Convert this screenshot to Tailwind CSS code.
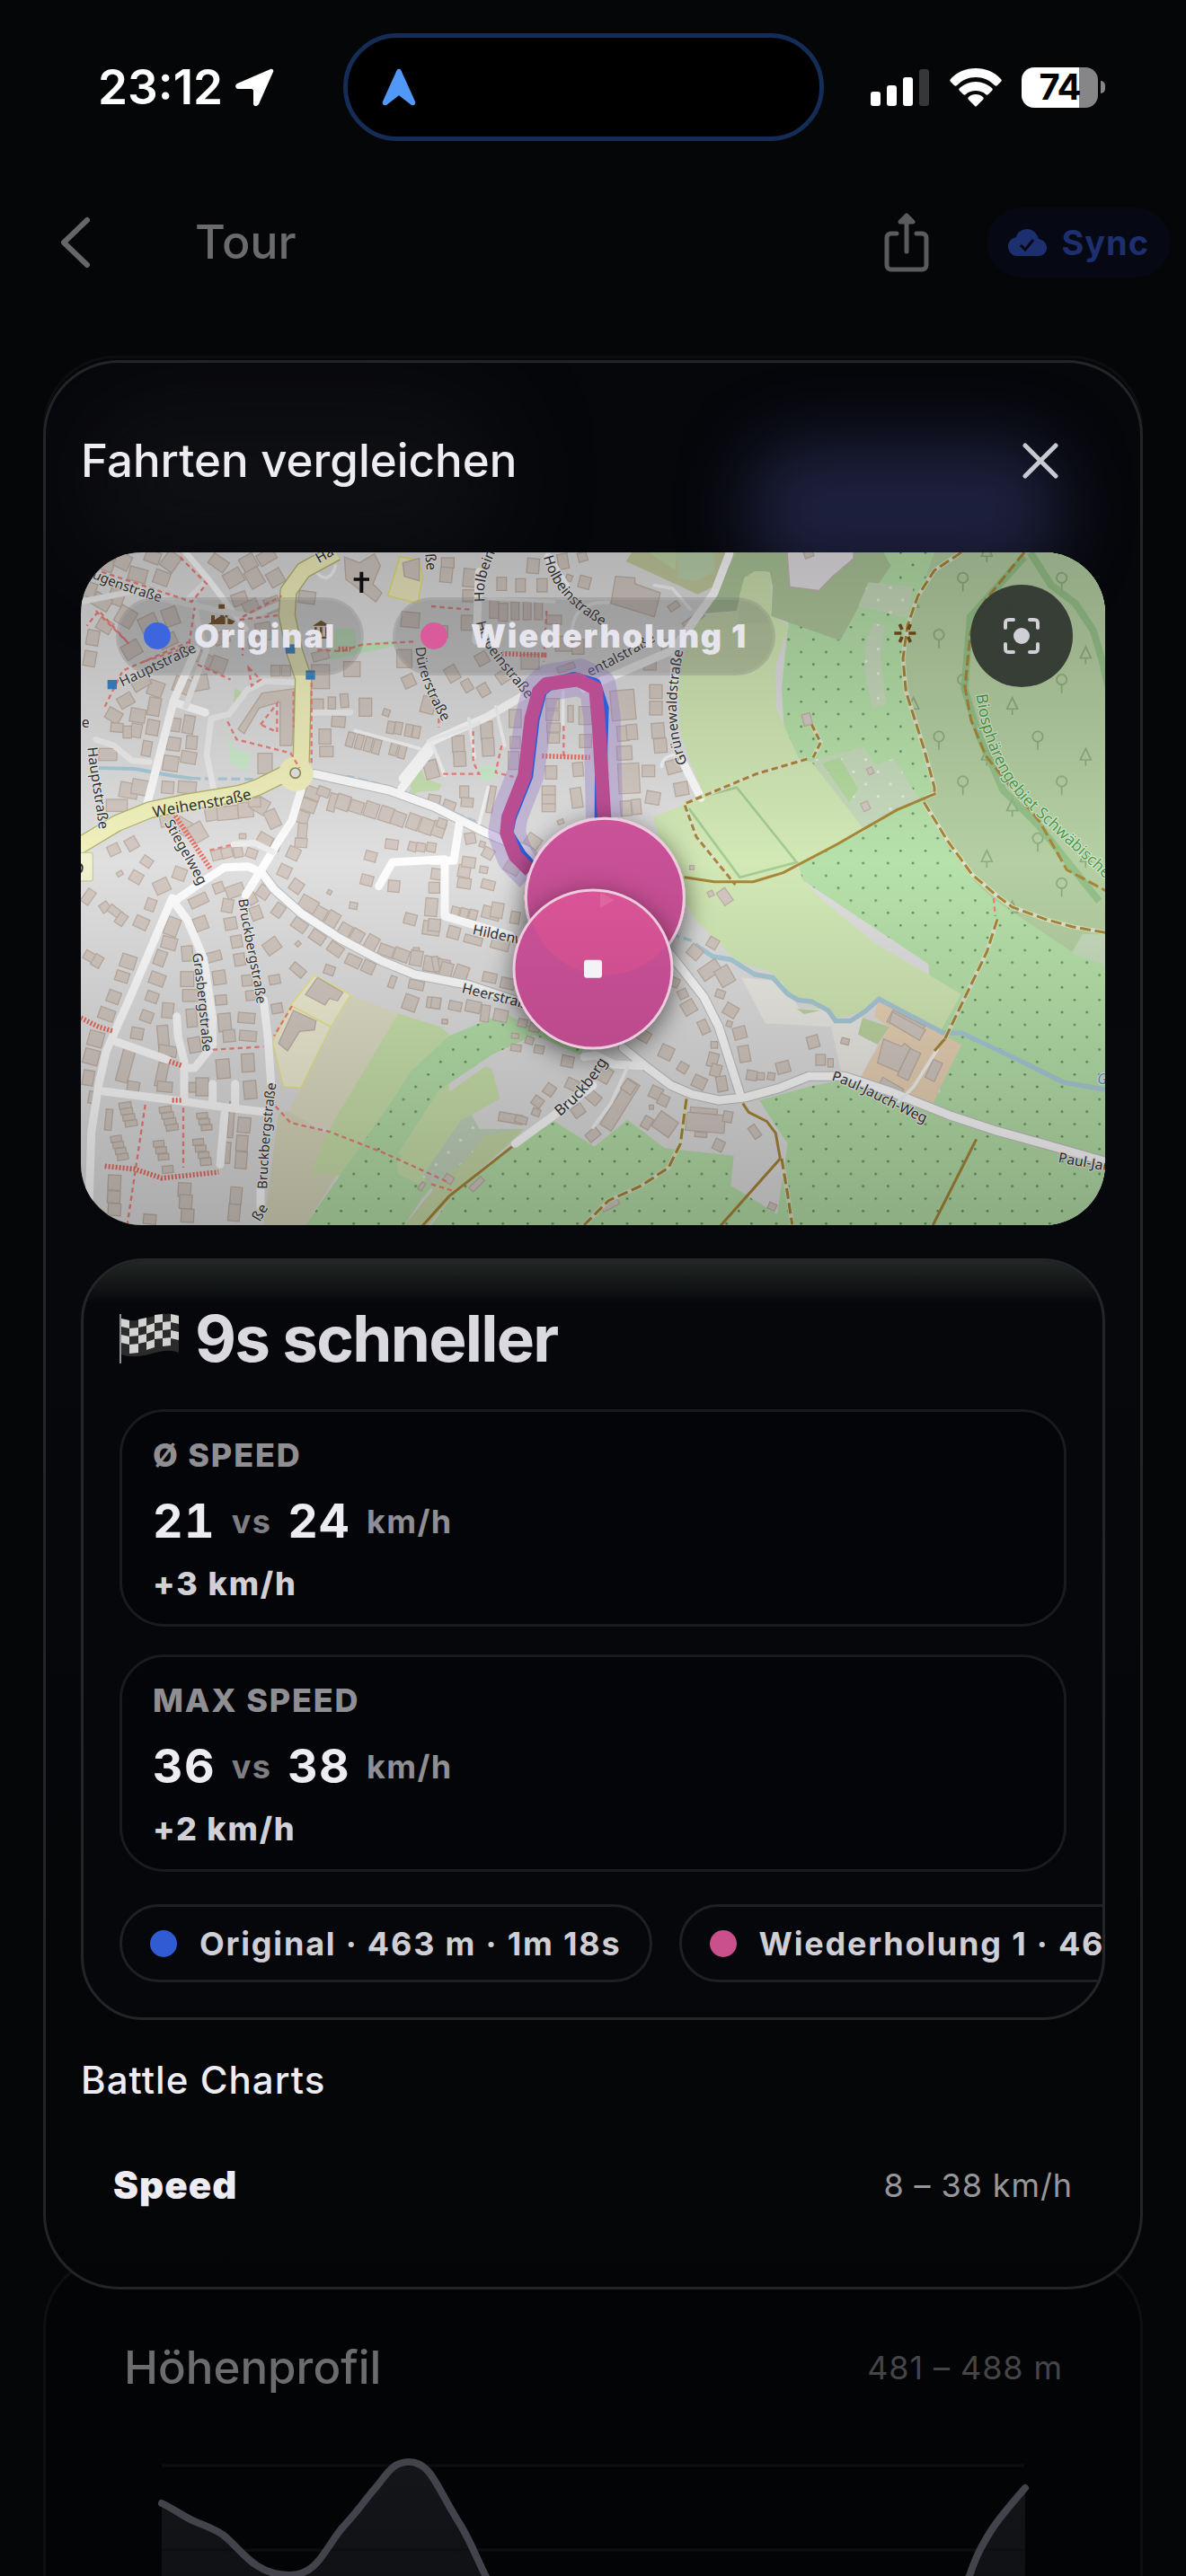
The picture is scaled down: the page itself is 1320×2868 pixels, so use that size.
<!DOCTYPE html>
<html lang="de">
<head>
<meta charset="utf-8">
<meta name="viewport" content="width=device-width, initial-scale=1">
<title>Fahrten vergleichen</title>
<script src="https://cdn.jsdelivr.net/npm/@tailwindcss/browser@4"></script>
</head>
<body class="bg-[#040607] font-['Inter',sans-serif] text-[#edecf2]">
<div class="flex h-screen flex-col overflow-hidden">

  <!-- Status bar -->
  <header class="grid h-[194px] shrink-0 grid-cols-[1fr_auto_1fr] items-center pr-[22px]">
    <div class="flex items-center gap-[14px] pl-[109px]">
      <span class="text-[53px] leading-[60px] font-semibold text-white">23:12</span>
      <svg class="h-[42px] w-[43px]" viewBox="0 0 43 42" aria-hidden="true"><path d="M39 1 2 17c-3 2-2 6 1 6h15c1 0 2 1 2 2v14c0 4 4 4 6 1L42 4c1-2-1-4-3-3z" fill="#fff"/></svg>
    </div>
    <div class="flex h-[120px] w-[535px] items-center rounded-full border-[5px] border-[#152c57] bg-black pl-[38px]">
      <svg class="h-[42px] w-[38px]" viewBox="0 0 38 42" aria-hidden="true"><path d="M16.500 2.500c1-2.500 4-2.500 5 0L37 37c1 3-1 5-4 4L20 31c-1-1-1-1-2 0L5 41c-3 1-5-1-4-4z" fill="#5299f7"/></svg>
    </div>
    <div class="flex items-center justify-end gap-[22px] pr-[68px]">
      <svg class="h-[42px] w-[66px]" viewBox="0 0 66 42" aria-hidden="true"><g fill="#fff"><rect x="0" y="26" width="11" height="16" rx="3"/><rect x="18" y="19" width="11" height="23" rx="3"/><rect x="36" y="10" width="11" height="32" rx="3"/></g><rect x="54" y="1" width="11" height="41" rx="3" fill="#363739"/></svg>
      <svg class="h-[43px] w-[58px]" viewBox="0 0 58 43" aria-hidden="true"><g fill="#fff"><path d="M29 0C18 0 8 4 1 12c-1 1-1 2 0 3l4 4c1 1 2 1 3 0C14 13 21 10 29 10s15 3 21 9c1 1 2 1 3 0l4-4c1-1 1-2 0-3C50 4 40 0 29 0z"/><path d="M29 15c-7 0-13 3-18 7-1 1-1 2 0 3l4 4c1 1 2 1 3 0 3-3 7-4 11-4s8 1 11 4c1 1 2 1 3 0l4-4c1-1 1-2 0-3-5-4-11-7-18-7z"/><path d="M29 29c-3 0-6 1-8 3-1 1-1 2 0 3l7 7c1 1 1 1 2 0l7-7c1-1 1-2 0-3-2-2-5-3-8-3z"/></g></svg>
      <div class="flex items-center gap-[3px]">
        <span class="flex h-[45px] w-[85px] items-center justify-center rounded-[14px] bg-linear-to-r from-white from-75% to-[#868688] to-75% text-[40px] leading-10 font-bold tracking-tight text-black">74</span>
        <span class="h-[14px] w-[5px] rounded-r-full bg-[#868688]"></span>
      </div>
    </div>
  </header>

  <!-- Navigation bar -->
  <nav class="flex h-[152px] shrink-0 items-center pr-[17px] pl-[66px]">
    <button aria-label="Zurück" class="mr-[117px]"><svg class="h-[58px] w-[34px]" viewBox="0 0 34 58" fill="none" stroke="#666668" stroke-width="6" stroke-linecap="round" stroke-linejoin="round"><path d="M31 4 5 29l26 25"/></svg></button>
    <h1 class="text-[52px] leading-[60px] font-medium text-[#6b6b6d]">Tour</h1>
    <button aria-label="Teilen" class="ml-auto"><svg class="h-[66px] w-[50px]" viewBox="0 0 50 66" fill="none" stroke="#5b5b5e" stroke-width="5" stroke-linecap="round" stroke-linejoin="round"><path d="M14 23H8c-3 0-5 2-5 5v30c0 3 2 5 5 5h34c3 0 5-2 5-5V28c0-3-2-5-5-5h-6M25 43V6"/><path d="M18 10 25 3l7 7z" fill="#5b5b5e"/></svg></button>
    <button class="ml-[64px] flex h-[78px] items-center gap-4 rounded-full bg-[#060813] px-6 text-[38px] leading-10 font-bold tracking-wide text-[#1d2f6e]">
      <svg class="h-[30px] w-[43px]" viewBox="0 0 43 30" aria-hidden="true"><path d="M34 11C32 4 27 0 21 0S10 4 9 9C4 10 0 14 0 19c0 6 4 11 10 11h24c5 0 9-4 9-9 0-6-4-9-9-10z" fill="#1d2f6e"/><path d="m14 18 5 5 9-11" fill="none" stroke="#060813" stroke-width="3"/></svg>
      Sync
    </button>
  </nav>

  <main class="mt-[50px] flex shrink-0 flex-col px-12">
    <div class="relative z-10 grid">
      <div class="col-start-1 row-start-1 mb-20 rounded-[80px] border-[3px] border-[#0d0e0f]"></div>

      <!-- Comparison sheet -->
      <section class="relative col-start-1 row-start-1 mt-[5px] overflow-hidden rounded-[84px] border-[3px] border-[#232428] bg-linear-to-b from-[#06070b] via-[#07080c] to-[#040506] px-[39px] pb-[89px]">
        <div class="absolute top-[88px] right-[90px] h-[150px] w-[345px] rounded-[60px] bg-[#1d203d] blur-[36px]"></div>
        <div class="absolute top-[40px] left-[40px] h-[180px] w-[460px] rounded-full bg-[#0f1013] blur-[50px]"></div>
        <div class="relative mt-[69px] flex h-20 items-center justify-between">
          <h2 class="text-[51px] leading-[60px] font-medium">Fahrten vergleichen</h2>
          <button aria-label="Schließen" class="mr-8 flex size-20 items-center justify-center"><svg class="size-10" viewBox="0 0 40 40" stroke="#c9c9d2" stroke-width="5" stroke-linecap="round"><path d="m3 3 34 34M37 3 3 37"/></svg></button>
        </div>

        <!-- Map -->
        <div class="relative mt-[62px] overflow-hidden rounded-[68px]">
          <svg class="block w-full" viewBox="30 45 3420 2247" role="img" aria-label="Karte">
            <defs>
              <pattern id="orchard" width="83" height="83" patternUnits="userSpaceOnUse" x="18" y="36"><circle cx="10" cy="10" r="4" fill="#628f5d"/><circle cx="51" cy="51" r="4" fill="#628f5d"/></pattern>
              <pattern id="vine" width="82" height="82" patternUnits="userSpaceOnUse" x="2354" y="194"><circle cx="10" cy="10" r="5" fill="#e6f0e1"/><circle cx="51" cy="51" r="5" fill="#e6f0e1"/></pattern>
              <pattern id="wood" width="330" height="340" patternUnits="userSpaceOnUse" x="2940" y="90"><g fill="none" stroke="#8faa80" stroke-width="5"><circle cx="35" cy="40" r="17"/><path d="M35 57v28M200 100l-18 38h36zM200 138v20M115 270l-18 38h36zM115 308v20"/><circle cx="285" cy="230" r="17"/><path d="M285 247v28"/></g></pattern>
              <linearGradient id="shade" x1="0" y1="0" x2="0" y2="1"><stop offset="0" stop-opacity=".19"/><stop offset=".25" stop-opacity=".09"/><stop offset=".46" stop-opacity="0"/><stop offset=".6" stop-opacity=".06"/><stop offset="1" stop-opacity=".23"/></linearGradient>
              <linearGradient id="pin" x1="0" y1="0" x2="0" y2="1"><stop offset="0" stop-color="#cb5299"/><stop offset="1" stop-color="#bb4b8c"/></linearGradient>
              <linearGradient id="pinTop" x1="0" y1="0" x2="0" y2="1"><stop offset="0" stop-color="#da5496"/><stop offset=".5" stop-color="#cf5090"/><stop offset="1" stop-color="#c94e8c"/></linearGradient>
              <filter id="drop" x="-30%" y="-30%" width="160%" height="160%"><feDropShadow dx="0" dy="24" stdDeviation="45" flood-opacity=".6"/></filter>
              <clipPath id="overlap"><circle cx="1782" cy="1198" r="258"/></clipPath>
            </defs>

            <!-- Land use -->
            <rect x="30" y="45" width="3420" height="2247" fill="#e0dfdf"/>
            <path fill="#b7e1aa" d="M2400 200 2480 45H3450V2292H1200L1280 2180 1470 2030 1610 1945 1745 2030 1855 1940 1980 2035 2210 2060 2200 2160 2355 2255 2390 2020 2295 1875 2460 1830 2600 1800 2900 1850 2860 1420 2440 1140 2400 1000 2370 500Z"/>
            <path fill="url(#orchard)" d="M2400 200 2480 45H3450V2292H1200L1280 2180 1470 2030 1610 1945 1745 2030 1855 1940 1980 2035 2210 2060 2200 2160 2355 2255 2390 2020 2295 1875 2460 1830 2600 1800 2900 1850 2860 1420 2440 1140 2400 1000 2370 500Z"/>
            <path fill="#d2e8b5" d="M2220 240 2240 140 2280 110 2330 110 2340 255 2395 290 2350 420 2350 560 2430 740 2470 745 2650 975 2420 1090 2440 1140 2500 1200 2680 1350 2970 1520 2900 1645 2700 1535 2640 1580 2560 1600 2400 1530 2340 1450 2220 1410 2080 1270 2000 1120 1940 930 2110 860 2060 730 2030 640 2025 450 2090 260Z"/>
            <path fill="#c4ca9f" d="M1870 45 1850 75 2090 185 2160 150 2220 45Z"/>
            <path fill="#c2d8a8" d="M1925 45 2015 105 2020 45Z"/><path fill="#bcd4ae" d="M2020 45h125v65l-60 30-60-8z"/>
            <path fill="#adc69a" d="M2220 45 2160 150 2100 250 2220 240 2240 150 2280 110 2330 110 2340 160 2335 258 2565 340 2625 230 2700 140 2735 90 2710 45Z"/>
            <path fill="#cde2b0" d="M2230 185 2245 130 2280 108h40l15 25-2 150h-110z"/>
            <path fill="#e4e1e4" stroke="#c9b3bb" stroke-width="4" d="M2388 40h222v25l-70 60-45 47-98-12z"/>
            <g fill="#c8dbbd"><path d="m2660 145 150 15-20 105-165-40z"/><path d="m2675 280 40 12-15 100 20 160-45 13-30-125 5-90z"/><path d="m2470 740 170-45 45 60 60-22 85 137-190 95z"/></g>
            <g fill="url(#vine)"><path d="m2660 145 150 15-20 105-165-40z"/><path d="m2675 280 40 12-15 100 20 160-45 13-30-125 5-90z"/><path d="m2470 740 170-45 45 60 60-22 85 137-190 95z"/></g>
            <path fill="#b5dba0" d="m2505 750 60-20 60 105-30 45z"/>
            <path fill="#b5cfa3" d="M2880 45 2840 160 2790 270 2775 330 2778 480 2810 600 2880 830 2840 870 2920 1020 3010 1140 3080 1205 3340 1380 3375 1320H3450V45Z"/>
            <path fill="url(#wood)" d="M2880 45 2840 160 2790 270 2775 330 2778 480 2810 600 2880 830 2840 870 2920 1020 3010 1140 3080 1205 3340 1380 3375 1320H3450V45Z"/>
            <path fill="#c8dbbd" d="m3375 1320 75 5v100l-112-42z"/>
            <path fill="#ecebe6" d="M2235 1465 2370 1480 2430 1570 2520 1570 2560 1610 2640 1600 2625 1655 2690 1690 2630 1805 2570 1785 2535 1630 2315 1618Z"/>
            <path fill="#bfd6a2" d="m2640 1600 90 30-40 58-65-33zM2420 1570l80 5-55 12z"/>
            <path fill="#ead3b6" d="m2695 1540 275 150-50 100-30 60-20 60-90-30-150-75 100-175-53-35z"/>
            <path fill="#e0dfc6" d="m930 1525 160 60-230 390-140-55z"/>
            <path fill="#dad9bd" d="m690 1920 30-10 220 125-160 257H640z"/>
            <path fill="#cbe3ad" d="m1090 1585 140 45 30 25 0 200-160 300-300-40 60-145z"/>
            <path fill="#b7e1aa" d="m1260 1660-130 120-50 80-300 432h330l60-90 60-70-80-35-60-45 135-210 180-120 140-65 155 68 20-68-105-30h-90l-80-45z"/>
            <path fill="url(#orchard)" d="m1260 1660-130 120-50 80-300 432h330l60-90 60-70-80-35-60-45 135-210 180-120 140-65 155 68 20-68-105-30h-90l-80-45z"/>
            <path fill="#cbe3ad" d="m1200 1630 40 15 20 15-60 50zM1200 1890l180-128 22 8 28 100-90 50-80 80-90 160-80-38-5-35z"/>
            <path fill="#c4d6be" d="m1200 2085 100-145 35-15 25 45h150l-110 60-80 60-100 100-50-60z"/><path fill="url(#vine)" d="m1200 2085 100-145 35-15 25 45h150l-110 60-80 60-100 100-50-60z"/>
            <path fill="#c8dba8" d="m1110 2292 130-160 80-60 60-80 130-22-60 60-150 130-110 132z"/>
            <path fill="#f0eed4" stroke="#ebe68e" stroke-width="5" d="m810 1458 120 64-65 108-100 205-60-5-35-150 65-130zM735 1560l130 70"/>
            <g fill="#c7e0b0"><path d="m520 640 20 60 60 20-20 60-50-30z" fill="#cdeccf"/><path d="m860 405 20-105h65l5 50 130-10 10 15z" fill="#c2e8c0"/><path d="m1130 810 30-60 20 50 55 20-10 20-70 5-20 15z"/><path d="m1055 190 40-130 65 10 10 60-15 85z" fill="#eeeac0" stroke="#e6e27a" stroke-width="5"/><path d="m1360 760 50-5 10 40-30 15-30-10z" fill="#cdeccf"/><path d="m545 500 20 10-10 50-15-15z"/></g>
            <path fill="none" stroke="#a4cc94" stroke-width="8" d="m2070 870 150-40 200 250-190 50-170-230"/>

            <!-- Water -->
            <g fill="none" stroke="#a9cbd8" stroke-width="16"><path d="m2080 1355 60 40 60 10 80 50 60 10 50 55 35 20 45 5 55 30 25 35h50l50-33 45-40 215 113h60l180 85 160 80 140 25"/><path stroke-width="12" d="m90 765 120 3 110 20 80 12"/><path stroke-dasharray="30 14" stroke-width="10" d="m400 800 230 3M870 790l60 5 200 50M1240 900l110 45M2000 1320l80 25"/></g>

            <g id="buildings" fill="#d3c9c2" stroke="#bfb1a6" stroke-width="4"></g>
            <g fill="#d3c9c2" stroke="#bfb1a6" stroke-width="4">
              <path d="m555 635 80-120 110-15-10 190h-40V545l-70 20-50 85z"/>
              <path d="m1815 125 65 5 0 20 85 30-20 80-145-45z"/><path d="m910 60 50 20 50-30 20 40-25 60 30 30-20 30-100-75z"/><path d="m1105 80 55-15v75l-50-15z"/>
              <path d="m820 1465 85 50-18 28-27-8-15 22-65-35z"/><path d="m740 1575 75 35-5 30-50 5-40 65-30-25z"/>
              <path d="m2740 1580 110 60-20 35-100-60zM2710 1670l60 25 10-10 20 15-40 80-70-30z"/>
            </g>

            <!-- Street casings and fills -->
            <g fill="none" stroke-linejoin="round" stroke-linecap="round">
              <g stroke="#c3c2c2" stroke-width="34">
                <path d="m810 785 250 55 150 55 170 85 140 60M630 1110l45 60 90 80 130 85 140 75 110 45 180 35 180 60M1840 1700l80 65 80 60 70 30 90 20 90-10 110-30 100-40h120l150 50 200 80 150 50 180 50 210 60M1960 1340l60 75 90 115 50 100 35 110 38 120"/>
              </g>
              <g stroke="#fdfdfd" stroke-width="27">
                <path d="m340 1212 100-70 70-45 80-3 40 20M580 1190l50-80 60-100 45-70 30-100"/>
                <path d="m55 2292 10-312 25-160 25-110 80-180 80-190 60-140"/>
                <path d="m340 1212 45 60 55 130 30 200 0 90-60 75h-35"/>
                <path d="m350 1595 5 70 20 80v130"/>
                <path d="m150 1680 170 60M105 1845l220 28 220 30 95 10M470 1820v70M545 1820v75M510 1920l-15 170"/>
                <path d="m580 1190 50-80 45 60 90 80 130 85 140 75 110 45 180 35 180 60"/>
                <path d="m640 1540 15 130 10 150M630 2170v60"/>
                <path d="m810 785 250 55 150 55 170 85 140 60 40 70"/>
                <path d="m1960 1340 60 75 90 115 50 100 35 110 38 120"/>
                <path d="m1200 705-100 130M1105 800l100-125 180-80 120-70"/>
                <path d="m1480 2020 130-95 130-100M1710 1730l40-5 60 30 100 5M1840 1700l80 65 80 60 70 30 90 20 90-10 110-30 100-40h120l150 50 200 80 150 50 180 50 210 60"/>
                <path d="m1200 1075 75 0 20-130M1245 1070l0 190 100 30 120 35M1025 1160l45-80 170-10"/>
                <path d="m2010 500 5-140 130-180 50-130M1360 110l-10 230M2010 370l-300 130M1590 60l60 100M2040 745l60 120"/>
                <path d="m340 545 105 35M250 890l90-350 75-170"/>
                <path d="m380 45 80 95 120 160" stroke-width="20"/>
              </g>
              <g stroke="#eeeeee" stroke-width="20"><path d="m480 870-30-150 15-120 60-15 60-80 60-30 110 5M380 210l60-60M30 210l200-40M300 200l300 60 110-50M410 210l10 70 30 90-70 190M800 580h130M80 670l60 20 60 50 60 5M540 1020l70-5 60 30"/></g>
              <path stroke="#f5f5f5" stroke-width="11" d="m945 640 215 60M1205 690l40 100M1190 675l170-60M1325 600l20 130M1415 560l30 130M1640 510v110M1360 950l30-120M1670 300c10-80 70-90 120-88M810 100c30 50 60 30 70-10M1390 200l220 10M1945 155l60 10 60 70M1970 760c0-30 30-40 60-40M1740 1965l60-80 55-120M2760 1880l50-50 80-125"/>
              <path stroke="#b4b36f" stroke-width="58" stroke-linecap="butt" d="m0 1040 150-90 110-45 120-25 180-30 60-20 80-40 65-25 8-300-30-90-25-120 5-80 50-70 110-60"/>
              <path stroke="#f2f2bd" stroke-width="50" stroke-linecap="butt" d="m0 1040 150-90 110-45 120-25 180-30 60-20 80-40 65-25 8-300-30-90-25-120 5-80 50-70 110-60"/>
            </g>
            <circle cx="748" cy="785" r="58" fill="#f2f2bd"/><circle cx="746" cy="782" r="17" fill="#e6e6e6" stroke="#8f9057" stroke-width="5"/>
            <rect x="0" y="1048" width="70" height="95" rx="8" fill="#f1f2cf" stroke="#c9cf9c" stroke-width="4"/><path d="M30 1086q10 12 0 28" fill="none" stroke="#333" stroke-width="6"/>

            <!-- Paths and tracks -->
            <path fill="none" stroke="#ee8079" stroke-width="7" stroke-dasharray="16 12" d="m100 110 300 100 50-60-90-90M80 240l110 110-100-110-40 50M110 560l60-120 230-100M240 410l150-50 20-130M570 260l130-70M560 270l130-15M570 300v90M420 420l110 50M520 610l30 60 180 45 30 50M740 510v120M800 480v280M630 620l55-70v95zM820 370l80 5 70-22 170-10M1200 225l140 12M1585 240l-10 170M1642 625v100M1240 785l120 0-20-40 0-110M1435 690l-20 90 60 15M1225 600v30M590 430l40 40-30 20zM470 1706l170-10M245 1890l-30 200-30 200M372 1900v200M735 1560l-60 100M680 1895l50 55 130 30 180 70 220 100M460 1040l80-20M3078 1200l5 60M1200 2155l80 25"/>
            <path fill="none" stroke="#ea6c62" stroke-width="17" stroke-dasharray="6 6" d="m345 925 120 180M30 1600l60 30 50 15M110 2095l100 10 90 30 190-20M325 1745l45 15M335 1875h30M1435 383l150 5M1570 725l160 5M890 368h40"/>
            <path fill="none" stroke="#8ebd82" stroke-width="24" opacity=".8" d="m3200 45 70 110 80 60 60 90 30 100 30 130M3180 60l-180 200-20 240 50 160 80 180 120 120 200 250"/>
            <path fill="none" stroke="#dbe5c8" stroke-width="15" d="m2970 45-90 60-55 85-35 100-15 110 10 110 60 190 35 130 0 20-30 15M2845 880l80 130 80 110 75 65 60 45 110 40 90 25 110 20M2455 735l-170 50-120 50-120 50 40 110 130 160M2470 620l30 60-25 50M3090 1270l-35 110-140 290M2052 1870l-20 150-40 80-90 60-110 50-90 90M2370 2070l20 120 15 100"/>
            <g fill="none" stroke="#a88738" stroke-width="9"><path stroke-dasharray="36 14" d="m2970 45-90 60-55 85-35 100-15 110 10 110 60 190 35 130 0 20M2845 880l80 130 80 110 75 65 60 45 110 40 90 25 110 20M3180 45l-130 160-50 110-18 180 20 110 50 120 80 100 100 120 90 160 130 70M3090 1270l-35 110-140 290M2052 1870l-20 150-40 80-90 60-110 50-90 90M2370 2070l20 120 15 100"/><path stroke-dasharray="22 12" d="m2455 735-170 50-120 50-120 50 40 110 130 160M2470 620l30 60-25 50"/><path d="m2885 850-130 55-200 115-180 95-100 30h-130l-100-15M2915 1670l-35 40M1470 2030l-210 165-90 100M2240 1885l20 30 60 30 30 40 15 85-200 225M3020 2005l-145 287"/></g>
            <g fill="#774f1c"><path d="m500 255 45 20-10 10h-80zM490 218h20v15h-20zM465 255h12v30h-12zM495 255h12v30h-12zM520 255h-8v30h8zM804 290l28-18 30 18zM810 295h8v30h-8zM828 295h8v30h-8zM846 295h8v30h-8zM804 326h60v7h-60z"/><path transform="translate(2782 315)" stroke="#774f1c" stroke-width="11" d="M-36 0h24M12 0h24M-18-30l8 18M18-30l-8 18M-18 30l8-18M18 30l-8-18"/></g>
            <path fill="#111" d="M961 110h12v20h20v10h-20v40h-12v-40h-20v-10h20z"/>
            <g fill="#3b86c8"><rect x="714" y="352" width="31" height="31"/><rect x="781" y="439" width="31" height="31"/><rect x="119" y="471" width="31" height="31"/></g>

            <!-- Labels -->
            <defs>
              <path id="l-haupt" d="M168 494 425 372"/><path id="l-haupt2" d="M52 697C60 780 78 860 92 985"/><path id="l-augen" d="M66 130C130 160 220 190 320 218"/><path id="l-weihen" d="M275 932C380 905 500 900 630 860"/><path id="l-stieg" d="M308 948C340 1010 380 1070 435 1180"/><path id="l-duerer" d="M1148 362C1150 430 1180 520 1255 640"/><path id="l-holb1" d="M1378 210C1370 130 1400 80 1440 -20"/><path id="l-holb2" d="M1575 60C1600 160 1670 240 1800 305"/><path id="l-holb3" d="M1350 278C1365 370 1440 430 1530 550"/><path id="l-ental" d="M1730 460C1800 425 1870 390 1970 328"/><path id="l-gruen" d="M2055 748C2008 640 2010 520 2048 340"/><path id="l-bio" d="M3020 520C3035 650 3085 790 3185 890L3520 1200"/><path id="l-gras" d="M402 1385C420 1500 428 1600 440 1750"/><path id="l-bruck1" d="M556 1204C570 1320 606 1440 622 1590"/><path id="l-bruck2" d="M652 2172C655 2050 665 1930 690 1770"/><path id="l-bruckb" d="M1630 1930C1690 1880 1740 1830 1795 1735"/><path id="l-jauch" d="M2535 1808C2640 1840 2720 1900 2880 1965"/>
            </defs>
            <g font-family="Noto Sans, sans-serif" font-size="47" fill="#333" stroke="#f0f0f0" stroke-width="6" stroke-linejoin="round" paint-order="stroke">
              <text><textPath href="#l-haupt">Hauptstraße</textPath></text>
              <text><textPath href="#l-haupt2">Hauptstraße</textPath></text>
              <text font-size="45"><textPath href="#l-augen">ugenstraße</textPath></text>
              <text font-size="51" stroke="#f2f2bd"><textPath href="#l-weihen">Weihenstraße</textPath></text>
              <text><textPath href="#l-stieg">Stiegelweg</textPath></text>
              <text><textPath href="#l-duerer">Dürerstraße</textPath></text>
              <text><textPath href="#l-holb1">Holbein</textPath></text>
              <text><textPath href="#l-holb2">Holbeinstraße</textPath></text>
              <text><textPath href="#l-holb3">Holbeinstraße</textPath></text>
              <text><textPath href="#l-ental">entalstraße</textPath></text>
              <text><textPath href="#l-gruen">Grünewaldstraße</textPath></text>
              <text fill="#4e9a51" stroke="#d9ecd0" font-size="53"><textPath href="#l-bio">Biosphärengebiet Schwäbische</textPath></text>
              <text font-size="45"><textPath href="#l-gras">Grasbergstraße</textPath></text>
              <text font-size="45"><textPath href="#l-bruck1">Bruckbergstraße</textPath></text>
              <text font-size="45"><textPath href="#l-bruck2">Bruckbergstraße</textPath></text>
              <text font-size="50"><textPath href="#l-bruckb">Bruckberg</textPath></text>
              <text><textPath href="#l-jauch">Paul-Jauch-Weg</textPath></text>
              <text transform="translate(3292 2082) rotate(10)">Paul-Jau</text>
              <text transform="translate(1336 1320) rotate(12)">Hildenw</text>
              <text transform="translate(1300 1515) rotate(14)">Heerstraß</text>
              <text transform="translate(32 630)">e</text>
              <text transform="translate(825 82) rotate(-30)">Ha</text>
              <text transform="translate(1180 50) rotate(85)">ße</text>
              <text transform="translate(628 2282) rotate(-60)">ße</text>
              <text x="3424" y="1820" fill="#5a93b8" font-style="italic">G</text>
            </g>

            <rect x="30" y="45" width="3420" height="2247" fill="url(#shade)"/>

            <!-- Recorded routes -->
            <g fill="none" stroke-linejoin="round">
              <path stroke="#9478c8" stroke-opacity=".38" stroke-width="124" d="m1540 1120-60-60-28-75 8-60 55-140 25-180 25-100 25-25 105-18 60 30 15 100 8 338"/>
              <path stroke="#2f5fd6" stroke-width="42" d="m1535 1098-38-42-44-72 10-52 56-140 22-190 25-95 25-20 85-22 70 20 26 80-4 130-2 240"/>
              <path stroke="#b84d92" stroke-width="46" d="m1530 1108-50-50-28-75 5-53 55-140 22-190 25-90 25-25 105-15 60 30 10 120 20 330"/>
            </g>

            <!-- Start and finish pins -->
            <circle cx="1780" cy="1198" r="264" fill="url(#pin)" stroke="#efcbe0" stroke-width="9" filter="url(#drop)"/>
            <circle cx="1740" cy="1437" r="264" fill="url(#pin)" filter="url(#drop)"/>
            <circle cx="1740" cy="1437" r="264" fill="url(#pinTop)" clip-path="url(#overlap)"/>
            <path d="m1764 1180 46 26-46 28z" fill="#e0659f"/>
            <circle cx="1740" cy="1437" r="264" fill="none" stroke="#efcbe0" stroke-width="9"/>
            <rect x="1710" y="1406" width="60" height="60" rx="9" fill="#f3f2f4"/>
          </svg>

          <div class="absolute inset-x-0 top-0 flex items-center justify-between pt-9 pr-9 pl-[39px]">
            <div class="flex gap-8 text-[36px] leading-10 font-black tracking-wider text-[#e6e4ec]">
              <span class="flex h-[87px] items-center gap-[26px] rounded-full border-[3px] border-white/8 bg-[#4a4a50]/25 px-[28px]"><i class="size-[30px] rounded-full bg-[#3d66de]"></i>Original</span>
              <span class="flex h-[87px] items-center gap-[26px] rounded-full border-[3px] border-white/8 bg-[#4a4a50]/25 px-[28px]"><i class="size-[30px] rounded-full bg-[#d95b9b]"></i>Wiederholung 1</span>
            </div>
            <button aria-label="Zentrieren" class="flex size-[114px] items-center justify-center rounded-full bg-[#343a33]/97">
              <svg class="size-10" viewBox="0 0 40 40" fill="none" stroke="#d0cfd6" stroke-width="4" stroke-linecap="round"><path d="M2 11V6c0-3 1-4 4-4h5M29 2h5c3 0 4 1 4 4v5M38 29v5c0 3-1 4-4 4h-5M11 38H6c-3 0-4-1-4-4v-5"/><circle cx="20" cy="20" r="9" fill="#d0cfd6" stroke="none"/></svg>
            </button>
          </div>
        </div>

        <!-- Result -->
        <article class="relative mt-[37px] overflow-hidden rounded-[70px] border-[3px] border-[#232528] bg-[#06070b] px-10 pt-10 pb-[39px]">
          <div class="absolute inset-x-0 top-0 h-12 bg-linear-to-b from-[#222723] to-transparent"></div>
          <h3 class="relative flex h-[92px] items-center gap-[18px] text-[71px] leading-[80px] font-bold tracking-tight text-[#dad9e0]">
            <svg class="h-[56px] w-[66px] shrink-0" viewBox="0 0 66 56" aria-hidden="true">
              <path d="M2 6c10 4 20 2 30-1s22-6 34-3v42c-10-4-20-2-30 1s-24 5-34 1z" fill="#2b2b2b"/>
              <g fill="#d2d2d0"><path d="M2 6l9 2v9l-9-2zM2 24l9 2v9l-9-2zM11 17l10-1v9l-10 1zM11 35l10-1v10l-10 1zM21 7l9-2v9l-9 2zM21 25l9-2v9l-9 2zM30 14l9-3v9l-9 3zM30 32l9-3v9l-9 3zM39 2l9-1v9l-9 1zM39 20l9-1v9l-9 1zM48 10l9-1v9l-9 1zM48 28l9-1v9l-9 1zM57 1l9 2v9l-9-2zM57 19l9 2v9l-9-2z"/></g>
              <path d="M1 1v55" stroke="#8d939b" stroke-width="2"/>
            </svg>
            9s schneller
          </h3>

          <dl class="relative mt-[33px] flex flex-col gap-[31px]">
            <div class="h-[242px] rounded-[50px] border-[3px] border-[#1a1b1f] bg-[#040508]/60 px-[34px] pt-7">
              <dt class="text-[36px] leading-10 font-extrabold tracking-wider text-[#8e8e93]">Ø SPEED</dt>
              <dd>
                <p class="mt-[22px] flex h-16 items-center gap-[18px] text-[52px] leading-[64px] font-bold tracking-wide tabular-nums">21 <span class="text-[36px] font-bold text-[#7e7e83]">vs</span> 24 <span class="text-[36px] font-bold text-[#8e8e93]">km/h</span></p>
                <p class="mt-[17px] text-[36px] leading-10 font-extrabold tracking-wider text-[#d0d0d6]">+3 km/h</p>
              </dd>
            </div>
            <div class="h-[242px] rounded-[50px] border-[3px] border-[#1a1b1f] bg-[#040508]/60 px-[34px] pt-7">
              <dt class="text-[36px] leading-10 font-extrabold tracking-wider text-[#8e8e93]">MAX SPEED</dt>
              <dd>
                <p class="mt-[22px] flex h-16 items-center gap-[18px] text-[52px] leading-[64px] font-bold tracking-wide tabular-nums">36 <span class="text-[36px] font-bold text-[#7e7e83]">vs</span> 38 <span class="text-[36px] font-bold text-[#8e8e93]">km/h</span></p>
                <p class="mt-[17px] text-[36px] leading-10 font-extrabold tracking-wider text-[#d0d0d6]">+2 km/h</p>
              </dd>
            </div>
          </dl>

          <ul class="relative mt-9 -mr-10 flex gap-[30px] overflow-hidden text-[36px] leading-10 font-bold tracking-wider whitespace-nowrap text-[#cfced4]">
            <li class="flex h-[87px] shrink-0 items-center gap-[25px] rounded-full border-[3px] border-[#1f2024] px-[31px]"><i class="size-[30px] rounded-full bg-[#315bd2]"></i>Original · 463 m · 1m 18s</li>
            <li class="flex h-[87px] shrink-0 items-center gap-[25px] rounded-full border-[3px] border-[#1f2024] px-[31px]"><i class="size-[30px] rounded-full bg-[#c94f8d]"></i>Wiederholung 1 · 463 m · 1m 9s</li>
          </ul>
        </article>

        <h3 class="mt-[43px] text-[42px] leading-[48px] font-medium tracking-wide">Battle Charts</h3>
        <div class="mt-[69px] flex items-center justify-between pr-[36px] pl-[36px] leading-[48px]">
          <h4 class="text-[42px] font-black tracking-wide">Speed</h4>
          <span class="text-[36px] font-normal tracking-wide text-[#97979b]">8 – 38 km/h</span>
        </div>
      </section>
    </div>

    <!-- Elevation profile -->
    <section class="-mt-[38px] rounded-[80px] border-[3px] border-[#0e0f11] bg-[#030406]">
      <div class="mt-[90px] flex h-16 items-center justify-between pr-[86px] pl-[87px]">
        <h2 class="text-[51px] leading-[60px] font-medium text-[#6c6c6e]">Höhenprofil</h2>
        <span class="text-[36px] leading-10 tracking-wide text-[#454549]">481 – 488 m</span>
      </div>
      <svg class="mt-[58px] block w-full" viewBox="51 2726 1218 400" role="img" aria-label="Höhenprofil">
        <defs><linearGradient id="fade" x1="0" y1="0" x2="0" y2="1"><stop offset="0" stop-color="#15161a"/><stop offset="1" stop-color="#06070a"/></linearGradient></defs>
        <path d="M180 2787C197 2795 205 2803 221 2809S240 2817 248 2822C268 2837 282 2867 322 2867C355 2867 362 2835 383 2812S410 2778 417 2771C430 2756 436 2741 455 2741C480 2741 485 2768 513 2812C530 2840 535 2865 560 2900L650 3080H940L1079 2868C1085 2850 1090 2838 1104 2816C1116 2798 1130 2783 1141 2770V3126H180Z" fill="url(#fade)"/>
        <path d="M180 2745H1140M180 2839H1140" stroke="#0d0e10" stroke-width="3"/>
        <path d="M180 2787C197 2795 205 2803 221 2809S240 2817 248 2822C268 2837 282 2867 322 2867C355 2867 362 2835 383 2812S410 2778 417 2771C430 2756 436 2741 455 2741C480 2741 485 2768 513 2812C530 2840 535 2865 560 2900L650 3080H940L1079 2868C1085 2850 1090 2838 1104 2816C1116 2798 1130 2783 1141 2770" fill="none" stroke="#43444b" stroke-width="8" stroke-linecap="round" stroke-linejoin="round"/>
      </svg>
    </section>
  </main>
</div>

<script>
// Houses on the map: centre x, centre y, width, height, rotation in degrees.
const houses = [
[110,85,60,40,20],[170,75,50,50,25],[220,120,60,45,15],[150,190,50,60,20],[100,210,60,45,30],[60,170,40,50,20],[270,60,50,40,20],[330,75,50,60,35],[300,130,50,45,20],[180,260,60,60,30],[110,290,50,40,30],[260,290,60,70,-25],[330,260,50,60,-20],[200,370,60,50,-30],[320,340,60,40,-25],[70,330,40,50,10],[60,400,40,50,10],
[490,80,60,40,35],[540,130,60,50,-30],[590,80,50,50,-30],[650,60,60,40,-30],[610,130,50,60,-30],[680,130,50,50,-30],[560,200,50,40,-20],[600,230,50,50,-25],[670,220,50,50,-20],[640,310,50,60,-10],[500,330,50,40,-20],[440,400,60,40,30],[490,420,50,50,20],[620,350,60,40,-10],
[785,195,55,40,8],[680,440,30,36,0],[715,440,30,36,0],[830,390,55,30,-15],[830,460,60,80,0],[935,435,55,50,0],[820,555,40,40,0],[868,548,25,40,0],[910,540,26,45,-5],[890,610,45,36,5],[980,562,42,60,0],[1050,580,22,22,20],[845,660,40,50,0],[850,710,45,35,0],[1125,475,40,40,-25],[1190,555,45,55,15],[1110,400,50,60,0],[1130,270,60,50,5],
[930,670,24,48,15],[960,678,24,48,15],[990,686,24,48,15],[1018,694,24,48,15],[1075,700,24,46,15],[1103,710,24,46,15],[1065,630,24,40,10],[1090,632,24,40,10],[1125,640,24,40,10],[1150,645,24,40,10],[1200,770,45,60,-15],[645,750,48,68,0],
[280,500,50,50,20],[230,480,60,40,-30],[180,540,50,40,-30],[140,590,50,40,30],[220,590,50,45,10],[275,560,40,60,10],[270,630,40,50,10],[215,640,35,45,10],[185,645,28,40,0],[250,700,30,50,10],[150,630,40,30,5],[120,720,60,40,0],[370,490,60,50,20],[430,480,50,50,-10],[390,620,36,60,10],[340,620,44,44,8],[340,685,44,44,8],[400,680,36,44,5],[390,730,50,40,10],[330,750,50,50,8],[320,830,40,40,5],[385,830,60,40,5],[190,840,60,50,10],[150,890,70,40,0],[230,830,60,50,10],
[470,915,50,50,-10],[520,915,70,45,-5],[580,905,50,50,-5],[630,890,50,50,30],[670,935,40,60,-25],[610,880,40,30,0],
[320,940,50,40,-10],[370,960,50,50,30],[420,980,50,60,-30],[140,1038,38,34,-25],[200,1018,38,40,-30],[250,1078,36,30,35],[215,1130,40,36,30],[300,1160,50,44,-25],[360,1118,42,40,20],[160,1118,20,14,-30],[485,1055,36,34,-15],[518,1048,36,34,-15],[555,1046,30,34,-10],[570,993,22,16,0],[645,1005,50,36,30],[680,1025,30,30,20],[600,1050,36,30,20],
[805,850,50,40,20],[790,890,50,40,20],[770,930,40,40,20],[770,975,30,50,5],[765,1015,40,30,5],[740,1050,40,40,25],[710,1110,40,40,25],[870,880,25,60,15],[905,880,45,50,18],[950,895,45,40,18],[1000,905,45,50,18],[1050,920,45,50,18],[1090,935,45,45,20],[1140,945,40,50,20],[1185,960,45,50,20],[1225,970,40,50,20],[840,845,40,30,20],
[1068,1020,42,32,8],[998,1060,38,32,15],[1138,1028,28,30,15],[1165,1030,30,28,10],[1200,1030,30,30,10],[985,1140,40,34,15],[1075,1160,38,38,5],[1220,1120,40,36,8],[1210,1165,36,36,0],[860,1180,14,14,30],[940,1225,26,22,10],
[55,1195,30,50,35],[110,1230,30,30,-35],[145,1245,50,26,38],[165,1270,30,40,35],[263,1222,32,40,20],[232,1282,46,38,25],[423,1208,62,34,-25],[490,1165,34,34,-20],[520,1225,36,44,10],[545,1175,60,40,-20],[530,1285,40,40,-10],[550,1345,36,40,-10],[615,1250,36,44,-20],[600,1200,30,40,-30],[640,1180,40,40,35],[690,1240,34,44,35],[668,1360,52,44,-35],[335,1295,44,60,20],[325,1350,50,40,15],[295,1400,36,50,20],[60,1395,40,30,30],[85,1410,30,40,30],[188,1412,50,44,18],[168,1462,44,34,18],[140,1530,42,40,20],[285,1470,50,40,20],[268,1530,40,34,20],[430,1285,44,44,-20],[475,1395,48,32,-15],[385,1385,36,50,-5],[385,1470,44,50,0],[395,1525,50,40,0],[492,1465,42,46,-8],[498,1540,38,32,-5],[560,1405,36,40,-10],[585,1475,34,36,-5],[598,1525,34,32,-5],[677,1472,36,30,-10],[685,1568,36,32,-10],[755,1440,50,30,40],[860,1440,34,30,20],[755,1352,16,14,-45],
[116,1588,52,38,20],[320,1575,38,50,5],[250,1595,40,36,20],[218,1652,40,38,10],[305,1665,36,80,-5],[320,1710,60,34,10],[400,1600,34,60,-5],[510,1615,42,60,-5],[525,1660,40,40,-5],[583,1600,56,34,5],[588,1660,56,34,5],[410,1690,40,50,-10],[80,1670,50,50,15],[65,1730,50,50,15],[180,1755,40,120,15],[205,1830,40,34,10],[300,1790,34,80,12],[310,1830,50,34,5],[505,1770,44,64,-5],[588,1750,42,60,-3],[595,1840,42,60,-5],[435,1830,42,60,0],[402,1832,24,32,0],[55,1800,36,50,10],[65,1865,18,40,10],
[123,1940,22,70,5],[178,1892,40,20,-8],[183,1912,40,20,-8],[190,1932,40,20,-8],[198,1952,40,20,-8],[148,2004,36,20,-8],[155,2024,36,20,-8],[163,2044,36,20,-8],[170,2064,36,20,-8],[312,1906,40,20,-8],[320,1926,40,20,-8],[328,1946,40,20,-8],[335,1966,40,20,-8],[290,2020,36,20,-5],[298,2042,36,20,-5],[306,2064,36,20,-5],[320,2106,36,24,-5],[435,1926,36,18,-5],[442,1946,36,18,-5],[450,1966,36,18,-5],[422,2014,36,20,-5],[430,2036,36,20,-5],[440,2058,36,20,-5],[447,2080,36,24,-5],[532,1940,18,120,4],[520,2050,18,70,4],[575,1958,42,50,5],[568,2018,38,52,5],[565,2075,38,56,5],[142,2150,42,50,3],[140,2198,42,40,3],[142,2240,42,40,3],[376,2174,42,46,3],[380,2214,42,46,3],[386,2260,42,44,3],[260,2272,42,32,5],[548,2194,38,58,5],[542,2250,38,56,5],
[750,1160,40,40,35],[790,1220,60,44,30],[830,1250,40,40,30],[870,1270,40,50,30],[910,1310,40,50,30],[950,1330,40,50,30],[1000,1350,40,50,30],[1050,1375,50,36,20],[1100,1390,50,40,20],[1150,1400,40,50,10],[1200,1420,50,50,10],[1240,1430,40,50,10],[760,1290,50,36,35],[820,1330,50,36,35],[880,1370,50,36,35],[940,1410,50,36,25],[990,1430,40,40,25],[1070,1480,20,40,20],[1150,1490,50,30,12],[1130,1550,46,50,20],[1208,1550,46,36,8],[1130,1270,40,36,15],[1200,1300,56,46,8],[1245,1612,18,14,0],[1200,1230,40,60,5],[1150,1370,20,10,0],
[1310,1110,40,40,10],[1280,1245,26,32,15],[1310,1250,26,32,15],[1340,1255,26,32,15],[1400,1250,60,40,15],[1420,1240,40,50,10],[1480,1265,30,40,10],[1210,1290,40,40,5],[1275,1315,40,40,15],[1340,1340,60,26,15],[1430,1355,60,34,15],[1215,1420,20,50,-10],[1250,1440,40,50,15],[1300,1450,44,50,20],[1395,1465,46,32,12],[1455,1485,46,36,12],[1215,1550,30,36,8],[1280,1560,42,30,12],[1340,1562,50,38,12],[1380,1585,28,55,8],[1432,1592,46,40,12],[1505,1617,30,26,12],[1245,1612,18,14,10],[1545,1632,34,28,12],[1480,1660,24,16,5],[1528,1675,26,24,18],[1483,1700,34,22,8],[1560,1705,32,26,10],
[1655,1745,40,36,12],[1670,1822,40,36,25],[1595,1840,34,36,35],[1555,1880,34,32,35],[1550,1915,26,24,20],[1465,1935,80,30,10],[1500,1940,40,24,15],[1740,1865,50,36,40],[1690,1910,40,36,-35],[1780,1790,40,50,30],[1830,1890,44,180,32],[1740,1990,44,32,-40],[1860,1830,40,40,35],[1950,1850,40,40,25],[1975,1875,34,36,25],[1980,1955,70,60,35],[1920,1950,30,40,30],[1935,1898,14,14,0],[2115,1950,130,60,5],[2190,1930,30,36,10],[2110,1910,90,18,5],[2100,1990,40,16,5],[2160,2025,34,36,25],[2280,1980,26,44,-35],[2338,2230,26,22,25],[1985,1715,44,44,25],[2040,1766,32,32,30],[2095,1815,44,40,25],[2140,1740,34,46,15],[2150,1775,34,40,15],[2170,1820,34,50,-10],[2110,1630,30,46,-25],[2060,1565,44,44,-30],[2040,1520,30,30,-25],[2010,1480,34,30,25],[1910,1660,40,36,30],[2080,1380,44,40,40],[2140,1350,34,34,30],[2130,1440,70,44,-35],[2180,1460,50,60,-30],[2165,1520,30,26,20],[2200,1575,44,40,30],[2230,1650,42,40,-15],[2195,1620,18,18,20],[2245,1720,36,54,-10],[2145,1690,22,22,0],[2270,1792,34,32,10],[2300,1795,24,24,0],[2335,1795,24,24,10],[2375,1765,44,38,-15],[2475,1680,38,40,-15],[2500,1740,32,36,0],[2533,1750,18,28,0],[2582,1678,26,20,15],[2785,1620,120,44,27],[2795,1755,40,100,25],[2878,1775,34,66,25],[2730,1840,80,50,30],
[1255,80,42,34,0],[1250,120,40,50,5],[1330,130,46,60,5],[1325,190,40,40,0],[1435,150,32,44,0],[1498,155,32,44,0],[1540,90,40,50,5],[1570,155,34,44,0],[1640,75,34,50,-10],[1705,60,30,30,-15],[1712,145,38,40,15],[1660,130,20,20,20],[1410,235,30,60,0],[1440,245,30,60,0],[1480,240,26,60,0],[1520,240,26,60,0],[1558,240,26,60,0],[1610,270,50,30,0],[1650,350,70,50,0],[1690,360,40,50,0],[1230,310,50,40,0],[1320,280,40,50,0],[1370,400,40,40,-30],[1440,460,40,40,-35],[1270,450,40,50,-30],[1320,490,30,40,-30],[1375,505,34,40,-30],[1530,410,60,50,0],[1650,430,60,20,-20],[2010,225,36,22,-35],[2060,280,40,22,-35],[2090,260,40,22,-35],[1930,420,42,36,0],[1990,360,42,46,0],
[1480,600,40,60,0],[1385,640,40,60,-3],[1390,695,40,60,-3],[1290,685,40,55,-3],[1295,735,40,50,-3],[1480,680,34,40,0],[1605,550,44,34,0],[1605,590,44,34,0],[1608,630,44,30,0],[1608,665,40,34,0],[1665,584,18,55,0],[1715,590,44,60,0],[1715,675,40,44,0],[1840,555,80,100,-5],[1950,510,42,46,0],[1950,565,42,46,0],[1957,640,42,50,-5],[1965,690,42,48,-5],[1840,650,38,50,-5],[1870,645,36,50,-5],[1845,715,50,46,-3],[1860,800,70,100,-3],[1925,775,42,38,0],[2010,760,50,44,-15],[1940,865,46,42,10],[2035,835,46,44,-10],[1600,780,38,44,0],[1690,770,34,46,-5],[1592,840,44,30,0],[1592,870,44,30,0],[1592,898,44,26,0],[1685,865,36,66,-8],[1850,900,36,50,-5],[1885,895,30,50,-5],[1632,945,20,14,-20],[1540,1010,50,40,35],[1475,740,36,60,0],
[1210,870,40,30,10],[1260,890,40,30,20],[1310,845,30,40,0],[1320,880,40,30,5],[1235,950,30,30,20],[1330,1000,34,36,-10],[1390,1050,36,34,30],[1325,1080,44,34,8],[1370,1020,18,18,20],[1375,1105,26,22,10],[1310,1150,44,34,8],[1390,1155,44,30,15],[1400,870,20,90,10],[1470,1100,50,34,30],
[2460,50,30,24,-20],[2455,603,28,38,-15],[2666,775,18,22,-25],[2650,893,24,28,-25],[2070,1098,14,14,0],[2133,1185,18,18,-25],[2180,1195,34,50,-35],[1258,2138,30,26,30],[1352,2155,20,54,45],[1798,2225,60,20,-28],[1168,2162,14,28,35]
];
document.getElementById('buildings').innerHTML = houses.map(([x, y, w, h, r]) =>
  `<rect x="${x - w / 2}" y="${y - h / 2}" width="${w}" height="${h}" transform="rotate(${r} ${x} ${y})"/>`).join('');
</script>
</body>
</html>
